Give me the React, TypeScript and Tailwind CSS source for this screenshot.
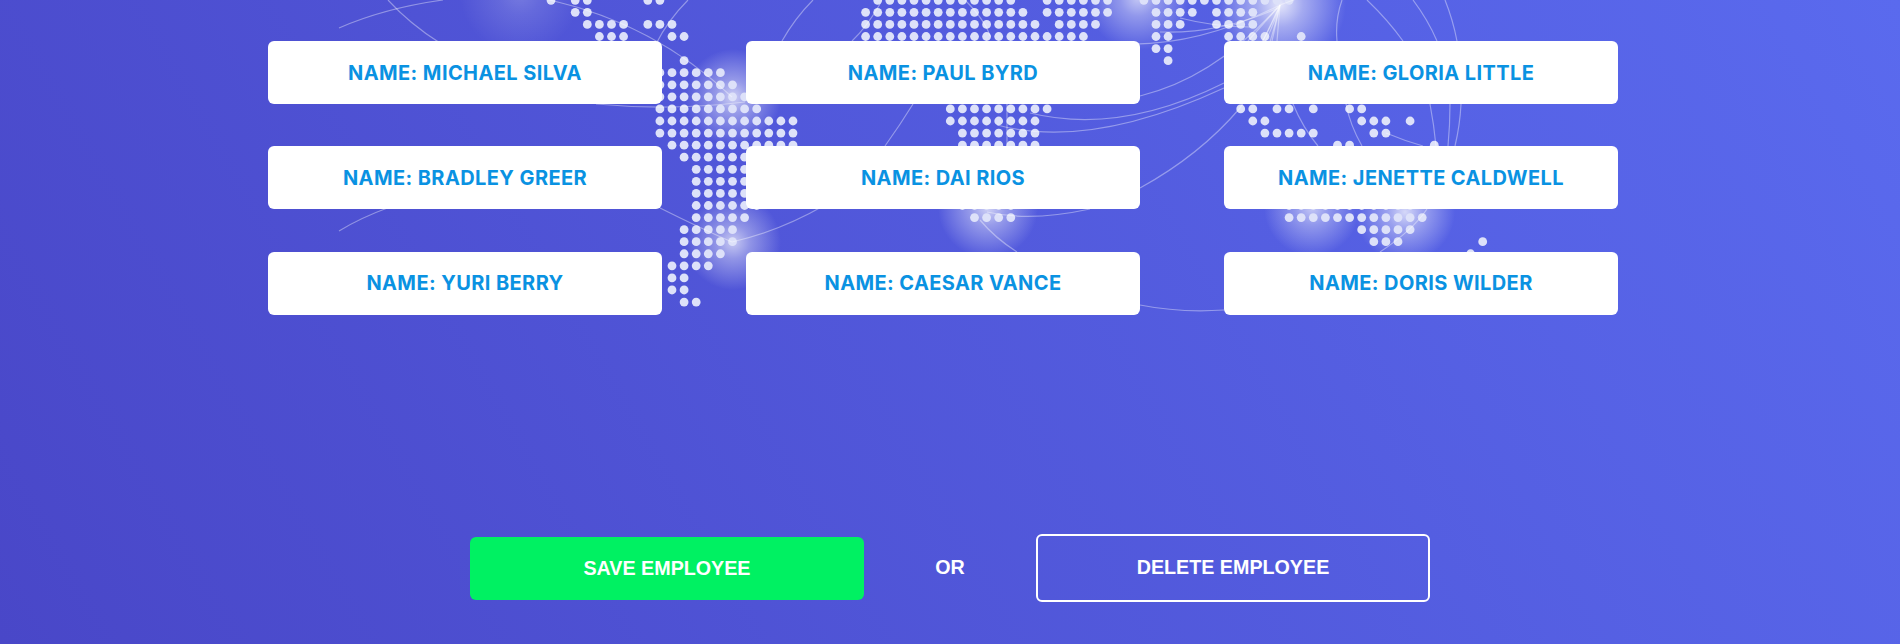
const names = [
  "MICHAEL SILVA",
  "PAUL BYRD",
  "GLORIA LITTLE",
  "BRADLEY GREER",
  "DAI RIOS",
  "JENETTE CALDWELL",
  "YURI BERRY",
  "CAESAR VANCE",
  "DORIS WILDER",
];

// Dot rows of the world map: row index -> [first column, last column] runs.
const dotRuns: Record<number, [number, number][]> = {
  0: [[-26, -26], [-24, -23], [-18, -17], [1, 12], [15, 20], [23, 35]],
  1: [[-24, -23], [0, 13], [15, 20], [24, 27], [29, 32]],
  2: [[-23, -20], [-18, -16], [0, 14], [16, 19], [24, 26], [29, 32]],
  3: [[-22, -20], [-16, -15], [0, 18], [24, 25], [30, 32], [33, 33], [36, 36]],
  4: [[24, 25]],
  5: [[-15, -15], [25, 25]],
  6: [[-17, -12]],
  7: [[-17, -11]],
  8: [[-17, -10]],
  9: [[-17, -9], [7, 15], [31, 32], [34, 35], [37, 37], [40, 41]],
  10: [[-17, -6], [7, 14], [32, 33], [41, 43], [45, 45]],
  11: [[-17, -6], [8, 14], [33, 37], [42, 43]],
  12: [[-16, -6], [8, 14], [39, 40], [47, 47]],
  13: [[-15, -9]],
  14: [[-14, -9]],
  15: [[-14, -9]],
  16: [[-14, -9]],
  17: [[-14, -9], [8, 12], [35, 45]],
  18: [[-14, -10], [9, 12], [35, 46]],
  19: [[-15, -11], [41, 45]],
  20: [[-15, -11], [42, 44], [51, 51]],
  21: [[-15, -12], [50, 50]],
  22: [[-16, -13]],
  23: [[-16, -15]],
  24: [[-16, -15]],
  25: [[-15, -14]],
};

const arcs = [
  "M339 28 Q385 8 443 0",
  "M388 0 Q410 24 440 43",
  "M339 231 Q360 218 390 207",
  "M540 -2 Q650 20 732 97",
  "M596 104 Q670 111 745 102",
  "M660 208 Q700 228 732 242",
  "M732 242 Q780 231 825 205",
  "M656 44 Q668 20 688 0",
  "M782 41 Q795 18 813 0",
  "M913 104 Q900 125 885 146",
  "M852 41 Q866 28 880 4",
  "M965 0 Q985 20 990 36",
  "M1007 98 L1007 146",
  "M1130 44 Q1200 45 1278 6",
  "M1140 96 Q1215 78 1280 5",
  "M1030 113 Q1120 135 1224 83 Q1255 66 1280 5",
  "M997 125 Q1090 150 1224 88 Q1260 68 1280 5",
  "M1140 188 Q1200 155 1240 108 Q1265 70 1280 5",
  "M987 212 Q1030 222 1090 209",
  "M980 220 Q995 238 1017 252",
  "M1140 305 Q1180 313 1224 310",
  "M1180 18 Q1215 27 1250 27",
  "M1160 32 Q1220 34 1278 8",
  "M1280 5 L1248 41",
  "M1280 5 L1263 41",
  "M1280 5 L1272 41",
  "M1280 5 L1277 41",
  "M1280 5 L1315 -8",
  "M1342 0 Q1335 20 1337 41",
  "M1367 0 Q1388 20 1403 41",
  "M1413 0 Q1428 20 1437 41",
  "M1445 0 Q1453 20 1457 41",
  "M1430 104 Q1434 125 1436 146",
  "M1450 104 Q1450 125 1448 146",
  "M1461 104 Q1460 125 1455 146",
  "M1293 104 Q1303 128 1318 146",
  "M1346 104 Q1350 125 1362 146",
  "M1386 133 Q1405 141 1423 146",
  "M1427 209 Q1413 230 1380 252",
];

const glows: [number, number, number, number][] = [
  [520, -6, 60, 0.22],
  [733, 97, 48, 0.72],
  [733, 242, 48, 0.68],
  [988, 208, 50, 0.72],
  [1138, -2, 52, 0.65],
  [1280, 4, 66, 0.85],
  [1312, 208, 48, 0.65],
  [1405, 212, 50, 0.75],
];

function WorldMap() {
  return (
    <svg className="absolute inset-0" width="1900" height="644" viewBox="0 0 1900 644" fill="none">
      <defs>
        <radialGradient id="glow">
          <stop offset="0" stopColor="#fff" stopOpacity="1" />
          <stop offset="0.35" stopColor="#fff" stopOpacity="0.55" />
          <stop offset="1" stopColor="#fff" stopOpacity="0" />
        </radialGradient>
      </defs>
      {glows.map(([cx, cy, r, o], i) => (
        <circle key={i} cx={cx} cy={cy} r={r} fill="url(#glow)" opacity={o} />
      ))}
      {Object.entries(dotRuns).flatMap(([row, runs]) =>
        runs.flatMap(([from, to]) =>
          Array.from({ length: to - from + 1 }, (_, i) => (
            <circle
              key={`${row}-${from + i}`}
              cx={865.6 + 12.1 * (from + i)}
              cy={0.3 + 12.07 * Number(row)}
              r="4.4"
              fill="#dde1f9"
            />
          )),
        ),
      )}
      {arcs.map((d, i) => (
        <path key={i} d={d} stroke="#fff" strokeOpacity="0.38" strokeWidth="1.2" />
      ))}
    </svg>
  );
}

export default function App() {
  return (
    <div className="relative h-[644px] w-full overflow-hidden bg-[linear-gradient(60deg,#4947c8,#5a6aee)]">
      <WorldMap />

      <div className="relative pl-[268px] pt-[41px]">
        {/* Employee names */}
        <div className="grid w-[1350px] grid-cols-3 gap-x-[84px] gap-y-[42.4px]">
          {names.map((name) => (
            <div
              key={name}
              className="flex h-[63px] items-center justify-center rounded-md bg-white font-['Inter',sans-serif] text-[20px] font-bold tracking-[0.4px] text-[#0a92e2]"
            >
              NAME: {name}
            </div>
          ))}
        </div>
      </div>

      {/* Actions */}
      <div className="relative mt-[219px] flex items-center justify-center font-['Liberation_Sans',Arial,sans-serif] text-[19.7px] font-bold text-white">
        <button className="mt-px h-[63px] w-[394px] rounded-md bg-[#00f162]">SAVE EMPLOYEE</button>
        <span className="w-[172px] text-center">OR</span>
        <button className="h-[68px] w-[394px] rounded-md border-2 border-white">DELETE EMPLOYEE</button>
      </div>
    </div>
  );
}
